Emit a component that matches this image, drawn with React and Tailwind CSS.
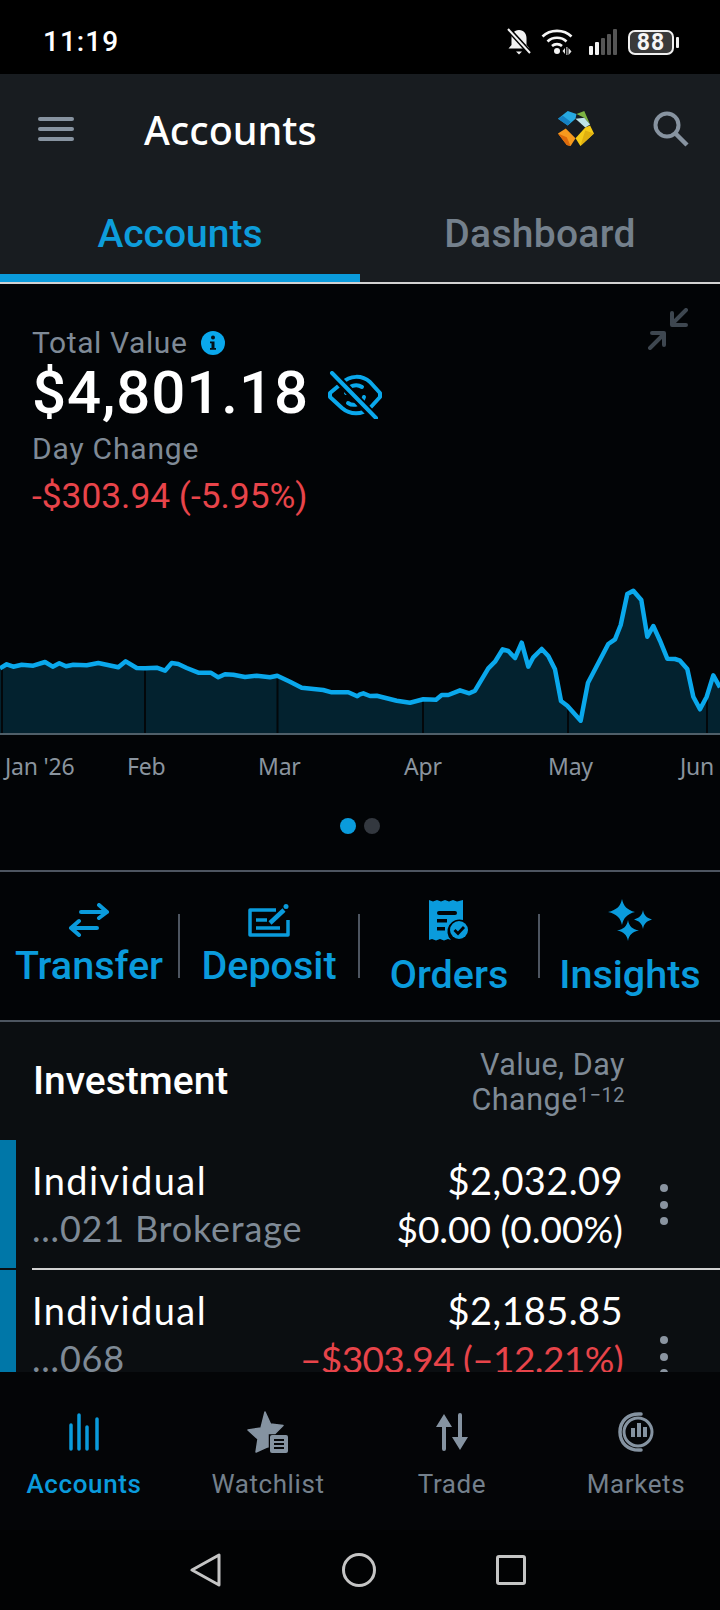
import React from "react";

const rawLeft = [[0,295],[20,283],[40,290],[65,284],[100,287],[135,276],[158,290],[178,280],[198,289],[220,284],[260,286],[295,279],[355,292],[377,274],[410,294],[435,295],[470,293],[495,302],[515,279],[535,282],[560,294],[595,308],[632,308],[655,322],[675,313],[700,314],[735,321],[770,317],[810,322],[832,317],[870,335],[905,353],[970,360],[995,367],[1045,367],[1072,379]];
const rawRight = [[0,373],[10,370],[30,378],[50,377],[80,385],[110,392],[150,398],[190,388],[228,389],[245,375],[265,375],[300,361],[328,370],[345,362],[385,295],[405,275],[428,238],[445,243],[465,264],[485,218],[505,290],[520,262],[545,237],[565,258],[585,298],[603,393],[622,407],[662,452],[684,338],[745,222],[765,208],[782,165],[802,72],[820,62],[844,90],[862,200],[880,168],[900,212],[922,266],[945,267],[960,272],[982,297],[1000,380],[1020,418],[1040,380],[1060,316],[1080,352]];
const pts = [...rawLeft, ...rawRight.map(([x, y]) => [x + 1080, y])].map(([x, y]) => [x / 3, 570 + y / 3]);
const line = pts.map(([x, y]) => `${x.toFixed(1)},${y.toFixed(1)}`).join(" ");
const area = `0,733 ${line} 720,733`;
const grid = [2, 145, 277.5, 423, 568, 707];

function Chart() {
  return (
    <svg width="720" height="166" viewBox="0 570 720 166" className="block">
      <polygon points={area} fill="#03222f" />
      {grid.map((x) => (
        <line key={x} x1={x} x2={x} y1={pts.reduce((b, p) => (Math.abs(p[0] - x) < Math.abs(b[0] - x) ? p : b))[1]} y2="733" stroke="#03070a" strokeWidth="2" />
      ))}
      <polyline points={line} fill="none" stroke="#0aa8ec" strokeWidth="4.500" strokeLinejoin="round" />
      <rect x="0" y="733" width="720" height="2" fill="#4f5f69" />
    </svg>
  );
}

function StatusIcons() {
  return (
    <div className="flex items-center">
      <svg width="26" height="28" viewBox="0 0 26 28" className="mr-[9px]">
        <path d="M13 2c5 0 7.500 4 7.500 8v7l3 3.500H2.500l3-3.500v-7C5.500 6 8 2 13 2z" fill="#f2f2f2" />
        <path d="M10 23.500h6l-3 3z" fill="#f2f2f2" />
        <path d="M3 2l21 23" stroke="#000" strokeWidth="5" />
        <path d="M2 1l22 24" stroke="#f2f2f2" strokeWidth="2" />
      </svg>
      <svg width="34" height="28" viewBox="0 0 34 28" className="mr-[14px]">
        <g fill="none" stroke="#f5f5f5" strokeWidth="2.600">
          <path d="M1.500 8.500C9 1 23 1 30.500 8.500" />
          <path d="M6.500 13.500c5-5 14-5 19 0" />
          <path d="M11 18c2.800-2.500 7.200-2.500 10 0" />
        </g>
        <circle cx="16" cy="23" r="3" fill="#f5f5f5" />
        <path d="M24 26v-6l-2.500 3zM27.500 20v7l3-3.500z" fill="#e5e5e5" />
        <rect x="25.400" y="19" width="1" height="8" fill="#e5e5e5" />
      </svg>
      <svg width="28" height="26" viewBox="0 0 28 26" className="mr-[11px]">
        <rect x="0" y="17" width="4" height="9" rx="1" fill="#f2f2f2" />
        <rect x="6" y="13" width="4" height="13" rx="1" fill="#f2f2f2" />
        <rect x="12" y="9" width="4" height="17" rx="1" fill="#555" />
        <rect x="18" y="5" width="4" height="21" rx="1" fill="#555" />
        <rect x="24" y="0" width="4" height="26" rx="1" fill="#555" />
      </svg>
      <div className="flex items-center">
        <div className="w-[46px] h-[25px] rounded-[7px] border-2 border-[#f0f0f0] bg-[#3a3a3a] flex items-center justify-center text-[#f5f5f5] font-['Roboto',sans-serif] font-bold text-[23px] leading-none tracking-[1px]">88</div>
        <div className="ml-[2px] w-[3px] h-[11px] rounded-[1px] bg-[#f0f0f0]" />
      </div>
    </div>
  );
}

function Logo() {
  return (
    <svg width="36" height="36" viewBox="0 0 37 37">
      <polygon points="0,8 10,0 19,3 18,8 10,15" fill="#27a9e1" />
      <polygon points="0,8 10,15 13,11 5,5" fill="#1580c2" />
      <polygon points="19,3 27,0 33,14 27,7" fill="#7cb342" />
      <polygon points="18,8 27,7 33,14 28,17" fill="#bfe3e8" />
      <polygon points="33,15 37,23 23,36 18,28 28,17" fill="#f5cb18" />
      <polygon points="37,23 23,36 28,20" fill="#e0b010" />
      <polygon points="0,23 8,18 18,28 13,36 9,35" fill="#f79a1e" />
      <polygon points="0,23 9,35 13,36 9,27" fill="#dd6a0c" />
    </svg>
  );
}

function Header() {
  return (
    <div className="bg-[#181c20] h-[210px] flex flex-col font-['Noto_Sans',sans-serif]">
      <div className="h-[108px] flex items-center pl-[38px] pr-[31px] pt-[2px]">
        <div className="flex flex-col gap-[6px] w-[36px]">
          <div className="h-[4px] rounded-sm bg-[#8793a0]" />
          <div className="h-[4px] rounded-sm bg-[#8793a0]" />
          <div className="h-[4px] rounded-sm bg-[#8793a0]" />
        </div>
        <div className="ml-[70px] flex-1 text-white text-[39.500px] leading-[46px] font-medium pt-[1px]">Accounts</div>
        <div className="mr-[59px] flex"><Logo /></div>
        <svg width="36" height="36" viewBox="0 0 36 36">
          <circle cx="14" cy="14" r="11.500" fill="none" stroke="#8793a0" strokeWidth="4" />
          <path d="M22 22l12 12" stroke="#8793a0" strokeWidth="4.500" />
        </svg>
      </div>
      <div className="flex h-[92px] font-['Roboto',sans-serif] text-[39px] font-medium">
        <div className="w-[360px] flex justify-center items-start pt-[28px] text-[#0d9ddb] leading-[48px]">Accounts</div>
        <div className="w-[360px] flex justify-center items-start pt-[28px] text-[#74808c] leading-[48px] tracking-[0.3px]">Dashboard</div>
      </div>
      <div className="h-[10px] flex flex-col">
        <div className="h-[8px] w-[360px] bg-[#0a9bdc]" />
        <div className="h-[2px] bg-[#d2d2d2]" />
      </div>
    </div>
  );
}

function Summary() {
  return (
    <div className="h-[588px] bg-[#020406] flex flex-col border-b-2 border-[#4d5560] font-['Roboto',sans-serif]">
      <div className="h-[234px] flex justify-between pl-[32px] pr-[31px] pt-[24px]">
        <div className="flex flex-col">
          <div className="flex items-center h-[36px] mt-[17px] text-[#7f8a96] text-[30px] leading-[36px] tracking-[0.6px]">
            Total Value
            <svg width="24" height="24" viewBox="0 0 24 24" className="ml-[13px]">
              <circle cx="12" cy="12" r="12" fill="#0aa8ec" />
              <circle cx="12" cy="6.500" r="2" fill="#031018" />
              <path d="M9 10.500h4.500V17H15v1.800H9V17h1.500v-4.700H9z" fill="#031018" />
            </svg>
          </div>
          <div className="flex items-center h-[63px] text-white text-[60px] leading-[63px] font-medium tracking-[0.9px]">
            $4,801.18
            <svg width="54" height="48" viewBox="0 0 54 48" className="ml-[19px] mt-[4px]" fill="none" stroke="#0aa8ec" strokeWidth="4" strokeLinecap="round" strokeLinejoin="round">
              <path d="M14 12C22 4 34 4 42 11L52 22V26L42 37C34 44 22 44 14 37L2 26V22Z" />
              <path d="M18 22c2-7 10-10 16-6M36 26c-2 7-10 10-16 6" />
              <path d="M3 1l44 46" stroke="#020406" strokeWidth="9" strokeLinecap="butt" />
              <path d="M4 2l44 45" />
            </svg>
          </div>
          <div className="h-[38px] mt-[6px] text-[#7f8a96] text-[30px] leading-[38px] tracking-[0.8px]">Day Change</div>
          <div className="h-[44px] mt-[6px] text-[#e8444a] text-[35.300px] leading-[44px]">-$303.94 (-5.95%)</div>
        </div>
        <svg width="42" height="42" viewBox="0 0 42 42" fill="none" stroke="#3e4750" strokeWidth="4" strokeLinecap="round" strokeLinejoin="round">
          <path d="M39 2L25 16M25 5v12h14" />
          <path d="M3 40l14-14M5 25h12v12" />
        </svg>
      </div>
      <div className="h-[52px]"></div>
      <Chart />
      <div className="grid grid-cols-[122px_131px_146px_144px_132px_auto] pl-[5px] mt-[14px] font-['Noto_Sans',sans-serif] text-[23px] leading-[32px] text-[#8a949e] tracking-[-0.2px]">
        <div>Jan '26</div>
        <div>Feb</div>
        <div>Mar</div>
        <div>Apr</div>
        <div>May</div>
        <div>Jun</div>
      </div>
      <div className="flex justify-center gap-[8px] pt-[36px]">
        <div className="w-[16px] h-[16px] rounded-full bg-[#0a9bdc]" />
        <div className="w-[16px] h-[16px] rounded-full bg-[#33383f]" />
      </div>
    </div>
  );
}

function Transfer() {
  return (
    <svg width="42" height="34" viewBox="0 0 42 34" fill="none" stroke="#0a9bdc" strokeWidth="4" strokeLinecap="round" strokeLinejoin="round">
      <path d="M13 9h26M31 2l8 7-8 6" />
      <path d="M29 25H3M11 18l-8 7 8 7" />
    </svg>
  );
}
function Deposit() {
  return (
    <svg width="42" height="34" viewBox="0 0 42 34" fill="none" stroke="#0a9bdc" strokeWidth="3.500" strokeLinejoin="round">
      <path d="M28 7H2v25h38V17" />
      <path d="M8 17h11M8 25h24" strokeWidth="3.500" />
      <path d="M22 20L36 7" strokeWidth="4.500" />
      <circle cx="38" cy="3.500" r="2.500" fill="#0a9bdc" stroke="none" />
    </svg>
  );
}
function Orders() {
  return (
    <svg width="42" height="42" viewBox="0 0 42 42">
      <path d="M1 1l4 1.500L9 1l4 1.500L17 1l4 1.500L25 1l4 1.500L35 1v20a12 12 0 0 0-12 20l-3-1-4 1.500-4-1.500-4 1.500-4-1.500L1 41z" fill="#0a9bdc" />
      <rect x="9" y="12" width="20" height="4" rx="2" fill="#020406" />
      <rect x="9" y="20" width="10" height="3.500" fill="#020406" />
      <rect x="9" y="28" width="8" height="3.500" fill="#020406" />
      <circle cx="31" cy="31" r="9" fill="#0a9bdc" />
      <path d="M26.500 31l3.500 3.500 6-6.500" fill="none" stroke="#020406" strokeWidth="2.800" />
    </svg>
  );
}
function Insights() {
  return (
    <svg width="44" height="42" viewBox="0 0 44 42" fill="#0a9bdc">
      <path d="M14 0c1.500 7 5 11 13 13-8 2-11.500 6-13 13-1.500-7-5-11-14-13 9-2 12.500-6 14-13z" />
      <path d="M35 11c.8 5 3.500 8 9 9.500-5.500 1.500-8.200 4.500-9 9.500-.8-5-3.500-8-9-9.500 5.500-1.500 8.200-4.500 9-9.500z" />
      <path d="M20 21c1 6 4.500 9.500 11 10.500-6.500 1-10 4.500-11 10.500-1-6-4.500-9.500-11-10.500 6.500-1 10-4.500 11-10.500z" />
    </svg>
  );
}

function Action({ icon, label, w, top, gap }) {
  return (
    <div className={`${w} h-full flex flex-col items-center ${top}`}>
      {icon}
      <div className={`${gap} text-[#0a9bdc] text-[39.500px] leading-[44px] font-medium whitespace-nowrap`}>{label}</div>
    </div>
  );
}

function Actions() {
  const Sep = () => <div className="w-[2px] h-[64px] mt-[42px] bg-[#4d5560] shrink-0" />;
  return (
    <div className="h-[150px] bg-[#020406] flex border-b-2 border-[#4d5560] font-['Roboto',sans-serif]">
      <Action icon={<Transfer />} label="Transfer" w="w-[178px]" top="pt-[31px]" gap="mt-[7px]" />
      <Sep />
      <Action icon={<Deposit />} label="Deposit" w="w-[178px]" top="pt-[31px]" gap="mt-[7px]" />
      <Sep />
      <Action icon={<Orders />} label="Orders" w="w-[178px]" top="pt-[27px]" gap="mt-[12px]" />
      <Sep />
      <Action icon={<Insights />} label="Insights" w="w-[180px]" top="pt-[27px]" gap="mt-[12px]" />
    </div>
  );
}

function Dots() {
  return (
    <div className="flex flex-col gap-[8.500px] w-[8px]">
      <div className="w-[8px] h-[8px] rounded-full bg-[#8a94a0]" />
      <div className="w-[8px] h-[8px] rounded-full bg-[#8a94a0]" />
      <div className="w-[8px] h-[8px] rounded-full bg-[#8a94a0]" />
    </div>
  );
}

function Row({ num, value, change, red, h, dotsPt }) {
  return (
    <div className={`flex ${h} shrink-0`}>
      <div className="w-[16px] bg-[#0077a8] shrink-0" />
      <div className="flex-1 flex pl-[16px] pt-[16px]">
        <div className="flex-1 flex flex-col font-['Lato',sans-serif]">
          <div className="text-white text-[38px] leading-[48px] tracking-[1.4px]">Individual</div>
          <div className="text-[#7f8a96] text-[36px] leading-[49px] tracking-[0.8px]">{num}</div>
        </div>
        <div className="flex flex-col items-end font-['Lato',sans-serif] pr-[-1px]">
          <div className="text-white text-[38px] leading-[48px] tracking-[0.4px]">{value}</div>
          <div className={red ? "text-[#e8444a] text-[37px] leading-[49px] tracking-[-0.6px]" : "text-white text-[37px] leading-[49px]"}>{change}</div>
        </div>
        <div className={`pl-[37px] pr-[52px] ${dotsPt}`}><Dots /></div>
      </div>
    </div>
  );
}

function List() {
  return (
    <div className="h-[350px] bg-[#0b0e11] overflow-hidden flex flex-col">
      <div className="h-[118px] shrink-0 flex justify-between pl-[33px] pr-[95px] font-['Roboto',sans-serif]">
        <div className="text-white text-[39px] leading-[46px] font-medium pt-[36px]">Investment</div>
        <div className="text-[#7f8a96] text-[30.500px] leading-[35px] text-right pt-[25px] tracking-[0.5px]">
          Value, Day<br />Change<span className="text-[20px] align-[8px] leading-none">1−12</span>
        </div>
      </div>
      <Row num="...021 Brokerage" value="$2,032.09" change="$0.00 (0.00%)" h="h-[128px]" dotsPt="pt-[28px]" />
      <div className="h-[2px] shrink-0 flex">
        <div className="w-[32px]" />
        <div className="flex-1 bg-[#d2d2d2]" />
      </div>
      <Row num="...068" value="$2,185.85" change="–$303.94 (–12.21%)" red h="h-[128px]" dotsPt="pt-[50px]" />
    </div>
  );
}

function BarsIcon({ c }) {
  return (
    <svg width="30" height="38" viewBox="0 0 30 38" fill="none" stroke={c} strokeWidth="3.500" strokeLinecap="round">
      <path d="M2 12v24M10 2v34M18 14v22M28 6v30" />
    </svg>
  );
}
function StarIcon({ c }) {
  return (
    <svg width="42" height="42" viewBox="0 0 42 42">
      <path d="M18 1l5.500 12L36 14.500l-8 8h-7v13.500l-1 0-11 5 2-13-10-9 13-2z" fill={c} stroke={c} strokeWidth="1.500" strokeLinejoin="round" />
      <rect x="23" y="24" width="18" height="18" rx="2" fill={c} />
      <path d="M27 29h10M27 33h10M27 37h10" stroke="#040507" strokeWidth="2" />
    </svg>
  );
}
function TradeIcon({ c }) {
  return (
    <svg width="32" height="38" viewBox="0 0 32 38" fill={c}>
      <path d="M0 14L8 1l8 13h-6v22a2 2 0 0 1-4 0V14z" />
      <path d="M32 24L24 37l-8-13h6V2a2 2 0 0 1 4 0v22z" />
    </svg>
  );
}
function MarketsIcon({ c }) {
  return (
    <svg width="36" height="40" viewBox="0 0 36 40" fill="none" stroke={c}>
      <path d="M23 2C10 1 2 9 2 20s8 19 21 18" strokeWidth="3.500" strokeLinecap="round" />
      <circle cx="20" cy="20" r="14" strokeWidth="3" />
      <path d="M15 16v9M21 11v14M27 15v10" strokeWidth="4" />
    </svg>
  );
}

function NavItem({ icon, label, active, w }) {
  return (
    <div className={`${w} shrink-0 flex flex-col items-center`}>
      <div className="h-[44px] flex items-center">{icon}</div>
      <div className={`mt-[14px] text-[26px] leading-[32px] tracking-[0.6px] ${active ? "text-[#0a9bdc] font-medium" : "text-[#74808c]"}`}>{label}</div>
    </div>
  );
}

function BottomNav() {
  return (
    <div className="h-[158px] bg-[#040507] flex pt-[38px] overflow-hidden font-['Roboto',sans-serif]">
      <NavItem w="w-[168px]" icon={<BarsIcon c="#0a9bdc" />} label="Accounts" active />
      <NavItem w="w-[200px]" icon={<StarIcon c="#8593a1" />} label="Watchlist" />
      <NavItem w="w-[168px]" icon={<TradeIcon c="#8593a1" />} label="Trade" />
      <NavItem w="w-[200px]" icon={<MarketsIcon c="#8593a1" />} label="Markets" />
    </div>
  );
}

function SystemNav() {
  return (
    <div className="h-[80px] bg-[#020304] flex items-center justify-center gap-[120px] pr-[4px]">
      <svg width="32" height="34" viewBox="0 0 32 34" fill="none" stroke="#c5c5c5" strokeWidth="3" strokeLinejoin="round"><path d="M29 2v30L2 17z" /></svg>
      <svg width="34" height="34" viewBox="0 0 34 34" fill="none" stroke="#c5c5c5" strokeWidth="3"><circle cx="17" cy="17" r="15.500" /></svg>
      <svg width="30" height="30" viewBox="0 0 30 30" fill="none" stroke="#c5c5c5" strokeWidth="3" strokeLinejoin="round"><rect x="1.500" y="1.500" width="27" height="27" rx="1.500" /></svg>
    </div>
  );
}

export default function App() {
  return (
    <div className="w-[720px] h-[1610px] overflow-hidden bg-black flex flex-col">
      <div className="h-[74px] bg-black flex items-center justify-between pl-[43px] pr-[41px] pt-[10px] shrink-0">
        <div className="text-white text-[28px] font-medium leading-none tracking-[1px] font-['Roboto',sans-serif]">11:19</div>
        <StatusIcons />
      </div>
      <Header />
      <Summary />
      <Actions />
      <List />
      <BottomNav />
      <SystemNav />
    </div>
  );
}
